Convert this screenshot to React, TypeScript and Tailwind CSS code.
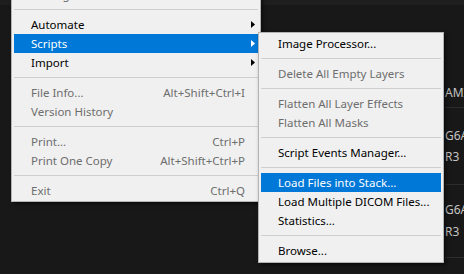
import React from "react";

type Item =
  | { sep: true }
  | {
      sep?: false;
      label: string;
      shortcut?: string;
      arrow?: boolean;
      disabled?: boolean;
      active?: boolean;
    };

const fileMenu: Item[] = [
  { label: "Package...", disabled: true },
  { sep: true },
  { label: "Automate", arrow: true },
  { label: "Scripts", arrow: true, active: true },
  { label: "Import", arrow: true },
  { sep: true },
  { label: "File Info...", shortcut: "Alt+Shift+Ctrl+I", disabled: true },
  { label: "Version History", disabled: true },
  { sep: true },
  { label: "Print...", shortcut: "Ctrl+P", disabled: true },
  { label: "Print One Copy", shortcut: "Alt+Shift+Ctrl+P", disabled: true },
  { sep: true },
  { label: "Exit", shortcut: "Ctrl+Q", disabled: true },
];

const scriptsMenu: Item[] = [
  { label: "Image Processor..." },
  { sep: true },
  { label: "Delete All Empty Layers", disabled: true },
  { sep: true },
  { label: "Flatten All Layer Effects", disabled: true },
  { label: "Flatten All Masks", disabled: true },
  { sep: true },
  { label: "Script Events Manager..." },
  { sep: true },
  { label: "Load Files into Stack...", active: true },
  { label: "Load Multiple DICOM Files..." },
  { label: "Statistics..." },
  { sep: true },
  { label: "Browse..." },
];

function Arrow({ white }: { white?: boolean }) {
  return (
    <svg width="4" height="7" viewBox="0 0 4 7" className="shrink-0">
      <polygon points="0,0 4,3.5 0,7" fill={white ? "#ffffff" : "#000000"} />
    </svg>
  );
}

function MenuRows({ items }: { items: Item[] }) {
  return (
    <>
      {items.map((it, i) => {
        if (it.sep) {
          return (
            <div key={i} className="h-[11px] flex items-center">
              <div className="h-px w-full bg-[#cfcfcf]" />
            </div>
          );
        }
        const color = it.active
          ? "bg-[#0078d7] text-white"
          : it.disabled
            ? "text-[#6d6d6d]"
            : "text-black";
        return (
          <div key={i} className={`h-[19px] flex items-center pl-[17px] pr-[3px] ${color}`}>
            <span className="flex-1 whitespace-nowrap leading-4 pt-px">{it.label}</span>
            {it.shortcut && <span className="whitespace-nowrap leading-4 pt-px mr-[10px]">{it.shortcut}</span>}
            {it.arrow && <Arrow white={it.active} />}
          </div>
        );
      })}
    </>
  );
}

export default function App() {
  return (
    <div className="relative w-[464px] h-[274px] overflow-hidden bg-[#181818] font-['Noto_Sans',sans-serif] text-[11.5px]">
      <div className="h-[5px] bg-[#1e1e1e]" />
      <div className="pl-[445px] text-[12px] text-[#c4c4c4] whitespace-nowrap">
        <div className="h-[103px] flex flex-col justify-end pb-[6px] border-b border-[#2d2d2d]">
          <span className="leading-4">AMI</span>
        </div>
        <div className="h-[77px] flex flex-col gap-[5px] pt-[20px] border-b border-[#2d2d2d]">
          <span className="leading-4">G6A</span>
          <span className="leading-4">R3</span>
        </div>
        <div className="h-[73px] flex flex-col gap-[6px] pt-[17px] border-b border-[#2d2d2d]">
          <span className="leading-4">G6A</span>
          <span className="leading-4">R3</span>
        </div>
      </div>

      <div className="absolute left-[11px] top-[-17px] w-[250px] bg-[#f0f0f0] border border-[#b4b4b4] pt-px pb-px px-[2px] shadow-[2px_2px_4px_rgba(0,0,0,0.5)]">
        <MenuRows items={fileMenu} />
      </div>

      <div className="absolute left-[258px] top-[32px] w-[186px] bg-[#f0f0f0] border border-[#b4b4b4] pt-px pb-[2px] pl-[2px] pr-[2px] shadow-[2px_2px_4px_rgba(0,0,0,0.5)]">
        <MenuRows items={scriptsMenu} />
      </div>
    </div>
  );
}
